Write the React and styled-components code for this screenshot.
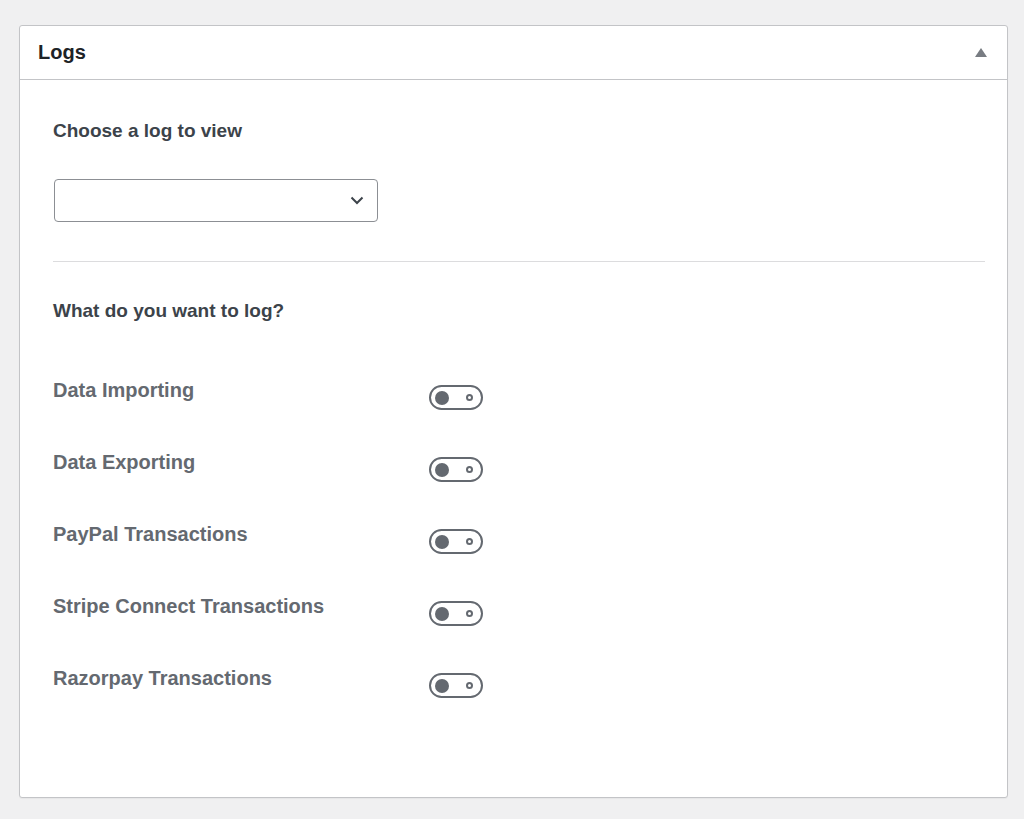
import React, { useState } from 'react';
import styled, { createGlobalStyle } from 'styled-components';

const GlobalStyle = createGlobalStyle`
  html, body {
    margin: 0;
    padding: 0;
    background: #f0f0f1;
    font-family: "Liberation Sans", Arial, sans-serif;
  }
`;

const Page = styled.div`
  padding: 25px 16px 20px 19px;
`;

const Panel = styled.section`
  width: 989px;
  height: 773px;
  background: #fff;
  border: 1px solid #c3c4c7;
  border-radius: 3px;
  box-shadow: 0 1px 1px rgba(0, 0, 0, 0.04);
  box-sizing: border-box;
`;

const Header = styled.header`
  display: flex;
  align-items: center;
  justify-content: space-between;
  height: 53px;
  padding: 0 20px 0 18px;
  border-bottom: 1px solid #c3c4c7;
`;

const Title = styled.h2`
  margin: 0;
  font-size: 20px;
  font-weight: 700;
  color: #1d2327;
`;

const Toggle = styled.button`
  border: 0;
  background: none;
  padding: 0;
  display: flex;
  cursor: pointer;
`;

const Body = styled.div`
  padding: 39px 22px 0 33px;
`;

const Heading = styled.h3`
  margin: 0;
  font-size: 19px;
  line-height: 24px;
  font-weight: 700;
  color: #3c434a;
`;

const SelectWrap = styled.div`
  position: relative;
  width: 324px;
  margin: 36px 0 0 1px;
`;

const Select = styled.select`
  appearance: none;
  width: 100%;
  height: 43px;
  border: 1px solid #8c8f94;
  border-radius: 4px;
  background: #fff;
  font: inherit;
  font-size: 16px;
  color: #2c3338;
  padding: 0 40px 0 10px;
  box-sizing: border-box;
`;

const Chevron = styled.svg`
  position: absolute;
  right: 14px;
  top: 17px;
  pointer-events: none;
`;

const Divider = styled.hr`
  border: 0;
  border-top: 1px solid #dcdcde;
  margin: 39px 0 37px;
`;

const Rows = styled.div`
  display: flex;
  flex-direction: column;
  gap: 40px;
  margin-top: 55px;
`;

const Row = styled.div`
  display: grid;
  grid-template-columns: 376px auto;
  align-items: start;
`;

const Label = styled.span`
  font-size: 20px;
  line-height: 24px;
  font-weight: 700;
  color: #646970;
`;

const Switch = styled.button`
  position: relative;
  width: 54px;
  height: 25px;
  margin-top: 7px;
  padding: 0;
  border: 2px solid #646970;
  border-radius: 13px;
  background: #fff;
  box-sizing: border-box;
  cursor: pointer;

  &::before {
    content: '';
    position: absolute;
    top: 3.5px;
    left: ${(p) => (p.$on ? '32px' : '4px')};
    width: 14px;
    height: 14px;
    border-radius: 50%;
    background: #646970;
  }

  &::after {
    content: '';
    position: absolute;
    top: 7px;
    right: ${(p) => (p.$on ? '33px' : '8px')};
    width: 3px;
    height: 3px;
    border-radius: 50%;
    border: 2px solid #646970;
  }
`;

const options = [
  'Data Importing',
  'Data Exporting',
  'PayPal Transactions',
  'Stripe Connect Transactions',
  'Razorpay Transactions',
];

export default function App() {
  const [enabled, setEnabled] = useState({});

  return (
    <>
      <GlobalStyle />
      <Page>
        <Panel>
          <Header>
            <Title>Logs</Title>
            <Toggle aria-label="Toggle panel">
              <svg width="12" height="9" viewBox="0 0 12 9">
                <path d="M6 0 L12 9 L0 9 Z" fill="#787c82" />
              </svg>
            </Toggle>
          </Header>
          <Body>
            <Heading>Choose a log to view</Heading>
            <SelectWrap>
              <Select defaultValue="">
                <option value=""></option>
              </Select>
              <Chevron width="14" height="9" viewBox="0 0 14 9">
                <path d="M1.5 1.5 L7 7 L12.5 1.5" fill="none" stroke="#3c434a" strokeWidth="2" />
              </Chevron>
            </SelectWrap>
            <Divider />
            <Heading>What do you want to log?</Heading>
            <Rows>
              {options.map((name) => (
                <Row key={name}>
                  <Label>{name}</Label>
                  <Switch
                    $on={!!enabled[name]}
                    aria-label={name}
                    onClick={() => setEnabled((s) => ({ ...s, [name]: !s[name] }))}
                  />
                </Row>
              ))}
            </Rows>
          </Body>
        </Panel>
      </Page>
    </>
  );
}
